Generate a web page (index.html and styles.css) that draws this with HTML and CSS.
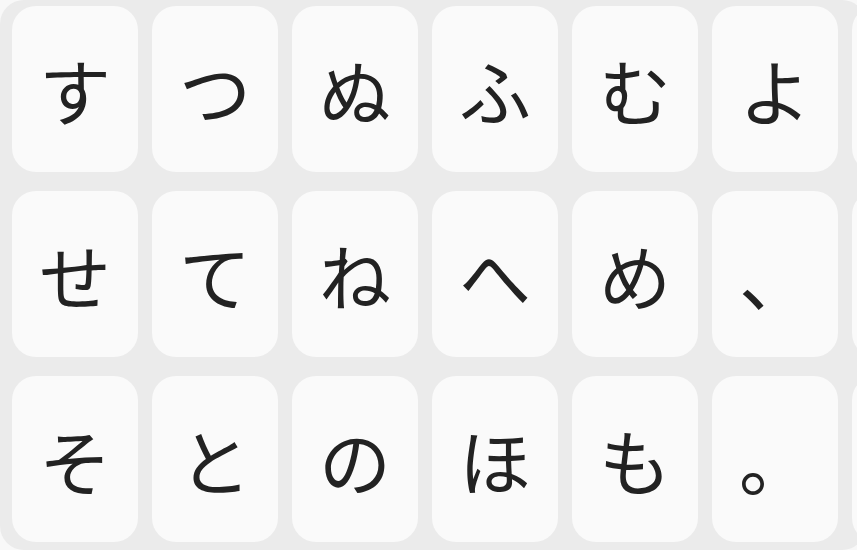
FILE: index.html
```html
<!DOCTYPE html>
<html lang="ja">
<head>
<meta charset="utf-8">
<link rel="stylesheet" href="styles.css">
</head>
<body>
<div class="keyboard">
  <div class="key">す</div><div class="key">つ</div><div class="key">ぬ</div><div class="key">ふ</div><div class="key">む</div><div class="key">よ</div><div class="key"></div>
  <div class="key">せ</div><div class="key">て</div><div class="key">ね</div><div class="key">へ</div><div class="key">め</div><div class="key">、</div><div class="key"></div>
  <div class="key">そ</div><div class="key">と</div><div class="key">の</div><div class="key">ほ</div><div class="key">も</div><div class="key">。</div><div class="key"></div>
</div>
</body>
</html>
```
FILE: styles.css
```css
html, body {
  margin: 0;
  padding: 0;
  background: #f8f8f8;
  overflow: hidden;
}
.keyboard {
  width: 866px;
  height: 550px;
  box-sizing: border-box;
  padding: 6px 12px 8px 12px;
  background: #ebebeb;
  border-radius: 24px;
  overflow: hidden;
  display: grid;
  grid-template-columns: repeat(7, 126px);
  grid-template-rows: repeat(3, 166px);
  column-gap: 14px;
  row-gap: 19px;
}
.key {
  background: #fafafa;
  border-radius: 24px;
  display: flex;
  align-items: center;
  justify-content: center;
  font-family: "Noto Sans CJK JP", "Noto Sans", sans-serif;
  font-size: 72px;
  line-height: 1;
  color: #222222;
}
```
